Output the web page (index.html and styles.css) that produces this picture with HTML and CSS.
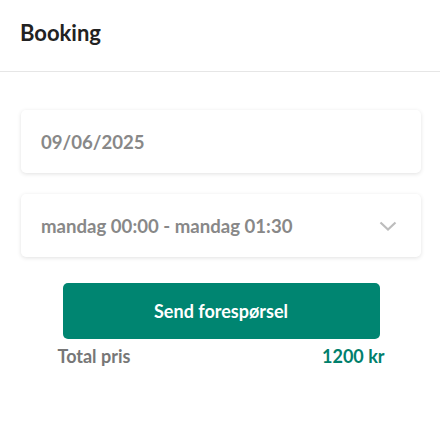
FILE: index.html
```html
<!DOCTYPE html>
<html lang="no">
<head>
<meta charset="utf-8">
<link rel="stylesheet" href="styles.css">
</head>
<body>
<header class="header"><h1 class="title">Booking</h1></header>
<main class="content">
  <div class="card field"><span class="field-text">09/06/2025</span></div>
  <div class="card field select">
    <span class="field-text">mandag 00:00 - mandag 01:30</span>
    <svg class="chevron" width="18" height="10" viewBox="0 0 18 10"><path d="M1.5 1.5 L9 8.5 L16.5 1.5" fill="none" stroke="#bdbdbd" stroke-width="2.2"/></svg>
  </div>
  <div class="actions">
    <button class="btn">Send forespørsel</button>
    <div class="total"><span class="total-label">Total pris</span><span class="total-value">1200 kr</span></div>
  </div>
</main>
</body>
</html>
```
FILE: styles.css
```css
* { box-sizing: border-box; }
html, body { margin: 0; padding: 0; background: #fff; }
body { font-family: Lato, "Noto Sans", sans-serif; width: 440px; height: 421px; overflow: hidden; }
.header { height: 72px; border-bottom: 1px solid #e6e6e6; padding: 20px 20px 0; }
.title { margin: 0; font-size: 22px; font-weight: 700; color: #222; line-height: 26px; }
.content { padding: 38px 19px 0 21px; display: flex; flex-direction: column; gap: 21px; }
.card { background: #fff; border-radius: 5px; box-shadow: 0 1px 4px rgba(0,0,0,0.12); }
.field { height: 63px; display: flex; align-items: center; padding: 0 20px; }
.select { justify-content: space-between; padding-right: 24px; }
.field-text { font-size: 18.6px; font-weight: 700; color: #888; }
.actions { display: flex; flex-direction: column; align-items: center; margin-top: 5px; }
.btn { width: 317px; height: 56px; border: none; border-radius: 5px; background: #008571; color: #fff; font-family: inherit; font-size: 18px; font-weight: 700; }
.total { width: 327px; display: flex; justify-content: space-between; margin-top: 6px; font-size: 18px; font-weight: 700; }
.total-label { color: #777; }
.total-value { color: #00806c; }
```
